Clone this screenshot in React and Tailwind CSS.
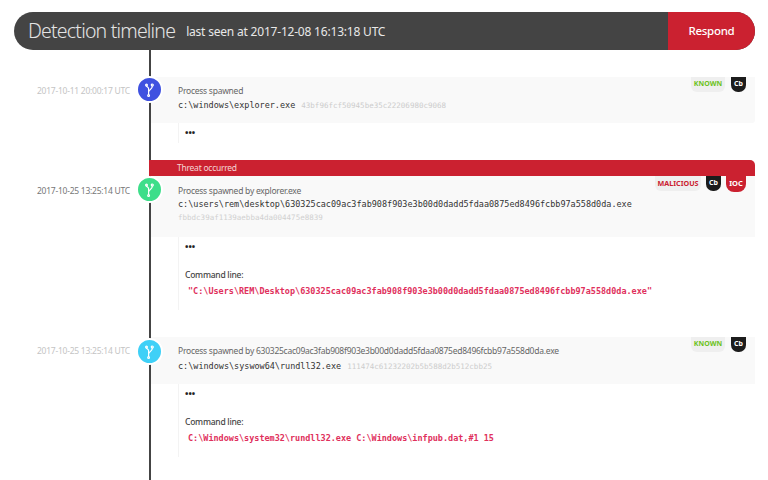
const SANS = "font-['Noto_Sans',sans-serif]";
const MONO = "font-['DejaVu_Sans_Mono',monospace]";

function ForkIcon() {
  return (
    <svg width="9" height="14" viewBox="0 0 9 14" fill="none" stroke="white" strokeWidth="1.2" strokeLinecap="round">
      <circle cx="1.5" cy="2" r="0.9" />
      <circle cx="7.3" cy="2" r="1" />
      <circle cx="3.6" cy="12.4" r="0.9" />
      <path d="M3.6 11.4 L3.6 5.5 Q3.4 4.4 1.5 3.2" />
      <path d="M3.6 8.6 C3.8 6.6 7.3 6.6 7.3 3.2" />
    </svg>
  );
}

function Node({ color, top }) {
  return (
    <div className={`absolute z-10 right-[-14px] w-[27px] h-[27px] rounded-full border-2 border-white flex items-center justify-center ${color} ${top}`}>
      <ForkIcon />
    </div>
  );
}

function Known() {
  return (
    <div className="flex gap-[6px]">
      <div className="h-[15px] w-[34px] rounded-b-[6px] bg-[#efefef] flex items-center justify-center text-[7px] font-bold text-[#6cc21c]">KNOWN</div>
      <Cb />
    </div>
  );
}

function Cb() {
  return (
    <div className="h-[15px] w-[15px] rounded-b-[7px] bg-[#1c1c1c] flex items-center justify-center text-[7px] font-bold text-white">Cb</div>
  );
}

function Details({ command, height }) {
  return (
    <div className={`ml-[27px] border-l border-[#f3f3f3] pl-[6px] ${height}`}>
      <div className="pt-[5px] text-[9px] leading-[10px] font-bold text-[#222]">•••</div>
      {command && (
        <>
          <div className="mt-[17px] text-[8.5px] tracking-[-0.25px] leading-[12px] font-medium text-[#444]">Command line:</div>
          <div className={`mt-[4px] ml-[3px] text-[8.47px] leading-[12px] font-bold text-[#e0305c] whitespace-nowrap ${MONO}`}>{command}</div>
        </>
      )}
    </div>
  );
}

export default function App() {
  return (
    <div className={`w-[768px] h-[480px] overflow-hidden bg-white flex flex-col ${SANS}`}>

      {/* HEADER */}
      <div className="mt-[12px] ml-[14px] mr-[13px] h-[38px] shrink-0 flex rounded-full overflow-hidden bg-[#444444]">
        <div className="flex-1 flex items-center pl-[14px]">
          <span className="text-[19.5px] tracking-[-0.8px] font-light text-[#e4e4e4]">Detection timeline</span>
          <span className="ml-[11px] mt-[2px] text-[12px] tracking-[-0.2px] text-[#e8e8e8]">last seen at 2017-12-08 16:13:18 UTC</span>
        </div>
        <div className="w-[87px] bg-[#cb2130] flex items-center justify-center text-[11.5px] tracking-[-0.3px] font-medium text-white">Respond</div>
      </div>

      {/* ROW 1 */}
      <div className="flex h-[110px] shrink-0">
        <div className="relative w-[149px] shrink-0 pt-[35px] pl-[37px] text-[8.5px] tracking-[-0.25px] leading-[12px] text-[#c4c4c4] whitespace-nowrap">
          2017-10-11 20:00:17 UTC
          <Node color="bg-[#3f51e0]" top="top-[26px]" />
        </div>
        <div className="flex-1 border-l-2 border-[#444444] mr-[13px] pt-[27px]">
          <div className="relative h-[46px] bg-[#f9f9f9] pl-[27px] pt-[8px] rounded-br-[3px]">
            <div className="text-[8.5px] tracking-[-0.25px] leading-[12px] text-[#666]">Process spawned</div>
            <div className={`-mt-[1px] leading-[13px] whitespace-nowrap ${MONO}`}>
              <span className="text-[8.47px] text-[#333]">c:\windows\explorer.exe</span>
              <span className="ml-[6px] text-[7.53px] text-[#cccccc]">43bf96fcf50945be35c22206980c9068</span>
            </div>
            <div className="absolute top-0 right-[9px]"><Known /></div>
          </div>
          <Details height="h-[20px]" />
        </div>
      </div>

      {/* ROW 2 */}
      <div className="flex h-[177px] shrink-0">
        <div className="relative w-[149px] shrink-0 pt-[25px] pl-[37px] text-[8.5px] tracking-[-0.25px] leading-[12px] text-[#777] whitespace-nowrap">
          2017-10-25 13:25:14 UTC
          <Node color="bg-[#3dde8a]" top="top-[16px]" />
        </div>
        <div className="flex-1 border-l-2 border-[#444444] mr-[13px]">
          <div className="h-[16px] -ml-[2px] bg-[#cb2130] rounded-tr-[5px] pl-[28px] text-[8.5px] tracking-[-0.25px] leading-[16px] text-[#f5d5d5]">Threat occurred</div>
          <div className="relative h-[61px] bg-[#f9f9f9] pl-[27px] pt-[9px]">
            <div className="text-[8.5px] tracking-[-0.25px] leading-[12px] text-[#666]">Process spawned by explorer.exe</div>
            <div className={`mt-[1px] text-[8.47px] leading-[13px] text-[#333] whitespace-nowrap ${MONO}`}>c:\users\rem\desktop\630325cac09ac3fab908f903e3b00d0dadd5fdaa0875ed8496fcbb97a558d0da.exe</div>
            <div className={`mt-[1px] text-[7.53px] leading-[12px] text-[#d0d0d0] ${MONO}`}>fbbdc39af1139aebba4da004475e8839</div>
            <div className="absolute top-0 right-[9px] flex gap-[5px]">
              <div className="h-[15px] w-[46px] rounded-b-[6px] bg-[#efefef] flex items-center justify-center text-[7.2px] font-bold text-[#cb2130]">MALICIOUS</div>
              <Cb />
              <div className="h-[16px] w-[20px] rounded-b-[8px] bg-[#cb2130] flex items-center justify-center text-[7.5px] font-bold text-white">IOC</div>
            </div>
          </div>
          <Details height="h-[73px]" command={'"C:\\Users\\REM\\Desktop\\630325cac09ac3fab908f903e3b00d0dadd5fdaa0875ed8496fcbb97a558d0da.exe"'} />
        </div>
      </div>

      {/* ROW 3 */}
      <div className="flex flex-1">
        <div className="relative w-[149px] shrink-0 pt-[8px] pl-[37px] text-[8.5px] tracking-[-0.25px] leading-[12px] text-[#c4c4c4] whitespace-nowrap">
          2017-10-25 13:25:14 UTC
          <Node color="bg-[#3fd0f7]" top="top-[1px]" />
        </div>
        <div className="flex-1 border-l-2 border-[#444444] mr-[13px]">
          <div className="relative h-[47px] bg-[#f9f9f9] pl-[27px] pt-[8px]">
            <div className="text-[8.5px] tracking-[-0.25px] leading-[12px] text-[#666] whitespace-nowrap">Process spawned by 630325cac09ac3fab908f903e3b00d0dadd5fdaa0875ed8496fcbb97a558d0da.exe</div>
            <div className={`leading-[13px] whitespace-nowrap ${MONO}`}>
              <span className="text-[8.47px] text-[#333]">c:\windows\syswow64\rundll32.exe</span>
              <span className="ml-[6px] text-[7.53px] text-[#cccccc]">111474c61232202b5b588d2b512cbb25</span>
            </div>
            <div className="absolute top-0 right-[9px]"><Known /></div>
          </div>
          <Details height="h-[73px]" command={'C:\\Windows\\system32\\rundll32.exe C:\\Windows\\infpub.dat,#1 15'} />
        </div>
      </div>

    </div>
  );
}
